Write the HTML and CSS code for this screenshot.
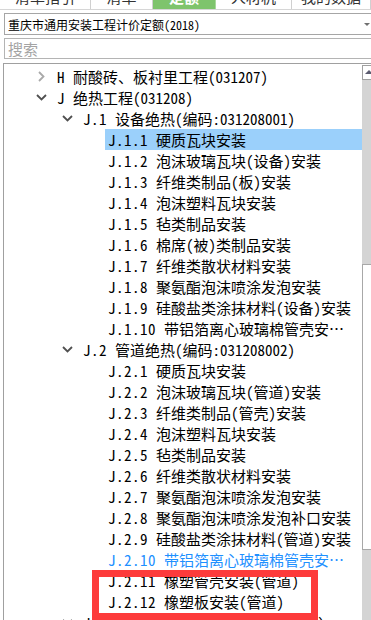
FILE: index.html
```html
<!DOCTYPE html>
<html lang="zh-CN">
<head>
    <meta charset="UTF-8">
    <title>定额树</title>
    <link rel="stylesheet" href="styles.css">
</head>
<body>

<div class="tabs">
    <div class="tab"><span>清单指引</span></div>
    <div class="tab"><span>清单</span></div>
    <div class="tab active"><span>定额</span></div>
    <div class="tab"><span>人材机</span></div>
    <div class="tab"><span>我的数据</span></div>
</div>

<div class="combo">
    <span class="combo-text">重庆市通用安装工程计价定额(2018)</span>
    <span class="combo-arrow"></span>
</div>

<div class="search">搜索</div>

<div class="tree">
    <div class="list">
        <div class="row lv0">
            <span class="tog"><svg width="7" height="11" viewBox="0 0 7 11"><polyline points="1,1 5.5,5.5 1,10" fill="none" stroke="#a9a9a9" stroke-width="1.8"/></svg></span>
            <span class="code">H</span>耐酸砖、板衬里工程(031207)
        </div>
        <div class="row lv0">
            <span class="tog"><svg width="11" height="7" viewBox="0 0 11 7"><polyline points="1,1 5.5,5.5 10,1" fill="none" stroke="#505050" stroke-width="1.8"/></svg></span>
            <span class="code">J</span>绝热工程(031208)
        </div>
        <div class="row lv1">
            <span class="tog"><svg width="11" height="7" viewBox="0 0 11 7"><polyline points="1,1 5.5,5.5 10,1" fill="none" stroke="#505050" stroke-width="1.8"/></svg></span>
            <span class="code">J.1</span>设备绝热(编码:031208001)
        </div>
        <div class="row leaf selected"><span class="code">J.1.1</span>硬质瓦块安装</div>
        <div class="row leaf"><span class="code">J.1.2</span>泡沫玻璃瓦块(设备)安装</div>
        <div class="row leaf"><span class="code">J.1.3</span>纤维类制品(板)安装</div>
        <div class="row leaf"><span class="code">J.1.4</span>泡沫塑料瓦块安装</div>
        <div class="row leaf"><span class="code">J.1.5</span>毡类制品安装</div>
        <div class="row leaf"><span class="code">J.1.6</span>棉席(被)类制品安装</div>
        <div class="row leaf"><span class="code">J.1.7</span>纤维类散状材料安装</div>
        <div class="row leaf"><span class="code">J.1.8</span>聚氨酯泡沫喷涂发泡安装</div>
        <div class="row leaf"><span class="code">J.1.9</span>硅酸盐类涂抹材料(设备)安装</div>
        <div class="row leaf"><span class="code">J.1.10</span>带铝箔离心玻璃棉管壳安…</div>
        <div class="row lv1">
            <span class="tog"><svg width="11" height="7" viewBox="0 0 11 7"><polyline points="1,1 5.5,5.5 10,1" fill="none" stroke="#505050" stroke-width="1.8"/></svg></span>
            <span class="code">J.2</span>管道绝热(编码:031208002)
        </div>
        <div class="row leaf"><span class="code">J.2.1</span>硬质瓦块安装</div>
        <div class="row leaf"><span class="code">J.2.2</span>泡沫玻璃瓦块(管道)安装</div>
        <div class="row leaf"><span class="code">J.2.3</span>纤维类制品(管壳)安装</div>
        <div class="row leaf"><span class="code">J.2.4</span>泡沫塑料瓦块安装</div>
        <div class="row leaf"><span class="code">J.2.5</span>毡类制品安装</div>
        <div class="row leaf"><span class="code">J.2.6</span>纤维类散状材料安装</div>
        <div class="row leaf"><span class="code">J.2.7</span>聚氨酯泡沫喷涂发泡安装</div>
        <div class="row leaf"><span class="code">J.2.8</span>聚氨酯泡沫喷涂发泡补口安装</div>
        <div class="row leaf"><span class="code">J.2.9</span>硅酸盐类涂抹材料(管道)安装</div>
        <div class="row leaf link"><span class="code">J.2.10</span>带铝箔离心玻璃棉管壳安…</div>
        <div class="row leaf"><span class="code">J.2.11</span>橡塑管壳安装(管道)</div>
        <div class="row leaf"><span class="code">J.2.12</span>橡塑板安装(管道)</div>
        <div class="row lv1">
            <span class="tog"><svg width="11" height="7" viewBox="0 0 11 7"><polyline points="1,1 5.5,5.5 10,1" fill="none" stroke="#505050" stroke-width="1.8"/></svg></span>
            <span class="code">J.3</span>通风管道绝热(编码:031208003)
        </div>
    </div>
    <div class="scroll">
        <div class="scroll-up"><span class="up-arrow"></span></div>
        <div class="scroll-track"></div>
        <div class="scroll-thumb"></div>
        <div class="scroll-track rest"></div>
    </div>
</div>

<div class="mark"></div>

</body>
</html>
```

FILE: styles.css
```css
html, body, div, span {
    margin: 0;
    padding: 0;
}
body {
    width: 371px;
    height: 620px;
    overflow: hidden;
    position: relative;
    background-color: #fff;
    font-family: "Noto Sans CJK SC", sans-serif;
    font-feature-settings: "hwid" 1;
    color: #000;
}

/* tab strip, only the bottom of it is on screen */
.tabs {
    display: grid;
    grid-template-columns: 91px 62px 63px 76px 1fr;
    height: 9px;
    border-bottom: 1px solid #d6d6d6;
}
.tab {
    height: 9px;
    overflow: hidden;
    border-right: 1px solid #d0d0d0;
    text-align: center;
    color: #333;
    font-size: 15px;
}
.tab>span {
    display: block;
    line-height: 16px;
    margin-top: -11px;
}
.tab.active {
    background-color: #7ec46c;
    border-right-color: #a8d89c;
    color: #fff;
    font-weight: bold;
}

.combo {
    box-sizing: border-box;
    width: 372px;
    height: 22px;
    margin: 3px 0 0 4px;
    padding-left: 3px;
    border: 1px solid #a6a6a6;
    display: flex;
    align-items: center;
    font-size: 12px;
}
.combo-arrow {
    margin-left: auto;
    margin-right: 5px;
    border-left: 3px solid transparent;
    border-right: 3px solid transparent;
    border-top: 3px solid #707070;
}

.search {
    box-sizing: border-box;
    width: 372px;
    height: 21px;
    margin: 3px 0 0 4px;
    padding-left: 3px;
    border: 1px solid #b4b4b4;
    font-size: 15px;
    line-height: 19px;
    color: #a4a4a4;
}

.tree {
    box-sizing: border-box;
    width: 375px;
    height: 560px;
    margin: 4px 0 0 3px;
    border: 1px solid #a0a0a0;
    display: flex;
}
.list {
    width: 358px;
    padding-top: 2px;
}
.row {
    height: 21px;
    display: flex;
    align-items: center;
    white-space: nowrap;
    font-size: 15px;
}
.row .code {
    letter-spacing: 0.5px;
    margin-right: 8px;
}
.lv0 {
    padding-left: 29px;
}
.lv1 {
    padding-left: 55px;
}
.tog {
    width: 16px;
    margin-right: 8px;
    display: flex;
    justify-content: center;
}
.leaf {
    margin-left: 101px;
    padding-left: 3px;
}
.selected {
    background-color: #9bd0fb;
}
.link {
    color: #1e90ff;
}

.scroll {
    flex: 1;
    display: flex;
    flex-direction: column;
}
.scroll-up {
    box-sizing: border-box;
    height: 15px;
    margin-top: 1px;
    border: 1px solid #a0a0a0;
    background-color: #fff;
    padding: 4px 0 0 2px;
}
.up-arrow {
    display: block;
    width: 0;
    border-left: 4px solid transparent;
    border-right: 4px solid transparent;
    border-bottom: 4px solid #5c5c70;
}
.scroll-track {
    height: 184px;
    background-color: #d4d4d4;
}
.scroll-thumb {
    box-sizing: border-box;
    height: 286px;
    background-color: #fff;
    border: 1px solid #a8a8a8;
}
.scroll-track.rest {
    flex: 1;
}

/* red annotation box drawn over the list */
.mark {
    position: absolute;
    left: 92px;
    top: 570px;
    width: 226px;
    height: 50px;
    box-sizing: border-box;
    border: 7px solid #fd3b3b;
}
```
